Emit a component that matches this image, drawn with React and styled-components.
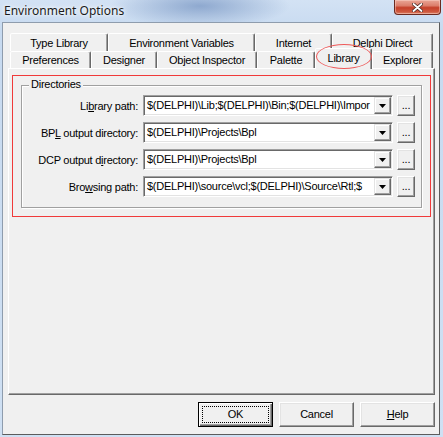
import React from "react";
import styled, { createGlobalStyle } from "styled-components";

const Global = createGlobalStyle`
  html, body { margin: 0; padding: 0; }
  body { width: 443px; height: 437px; overflow: hidden; background: #cddff3; }
  * { box-sizing: border-box; }
`;

const Window = styled.div`
  width: 443px;
  height: 437px;
  display: flex;
  flex-direction: column;
  background:
    radial-gradient(ellipse 90px 22px at 200px 6px, rgba(120,150,195,0.75), rgba(120,150,195,0) 100%),
    linear-gradient(#d3e2f4, #c7daf0 30px, #cfe0f3);
  font-family: "Liberation Sans", Arial, sans-serif;
  font-size: 11px;
  letter-spacing: -0.25px;
  color: #000;
`;

const TitleBar = styled.div`
  height: 22px;
  display: flex;
  align-items: flex-start;
  flex-shrink: 0;
`;

const Title = styled.div`
  padding-left: 4px;
  line-height: 21px;
  font-family: "Noto Sans", "Open Sans", sans-serif;
  font-size: 12px;
  letter-spacing: 0;
  color: #1b1b1b;
  text-shadow: 0 0 6px #fff, 0 0 3px #fff;
`;

const CloseButton = styled.div`
  margin-left: auto;
  margin-right: 2px;
  width: 47px;
  height: 15px;
  border: 1px solid #6b2a20;
  border-top: none;
  border-radius: 0 0 4px 4px;
  background: linear-gradient(#e9a696 0%, #dc7f6c 40%, #c5402a 55%, #cf5a40 85%, #dd8a6e 100%);
  box-shadow: inset 0 0 0 1px rgba(255,220,210,0.45);
  display: flex;
  align-items: center;
  justify-content: center;
`;

const Client = styled.div`
  flex: 1;
  margin: 0 3px 2px 2px;
  border: 1px solid;
  border-color: #8e9cad #5c5c5c #5c5c5c #8e9cad;
  background: #f0f0f0;
  display: flex;
  flex-direction: column;
`;

const TabControl = styled.div`
  position: relative;
  flex: 1;
  margin: 10px 4px 0 5px;
  display: flex;
  flex-direction: column;
`;

const TabStrip = styled.div`
  padding: 0 1px 0 2px;
  display: flex;
  flex-direction: column;
`;

const TabRow = styled.div`
  display: flex;
  align-items: flex-end;
  height: ${(p) => p.$h}px;
`;

const Tab = styled.div`
  position: relative;
  width: ${(p) => p.$w}px;
  height: ${(p) => (p.$active ? p.$h + 4 : p.$h)}px;
  margin-top: ${(p) => (p.$active ? -3 : 0)}px;
  margin-bottom: ${(p) => (p.$active ? -1 : 0)}px;
  z-index: ${(p) => (p.$active ? 2 : 1)};
  flex-shrink: 0;
  border: 1px solid;
  border-bottom: none;
  border-color: #fff #696969 transparent #fff;
  border-radius: 2px 2px 0 0;
  box-shadow: inset -1px 0 #a0a0a0;
  background: #f0f0f0;
  display: flex;
  align-items: center;
  justify-content: center;
  padding-bottom: ${(p) => (p.$active ? 2 : 0)}px;
  white-space: nowrap;
`;

const TabCircle = styled.div`
  position: absolute;
  left: 308px;
  top: 11px;
  width: 56px;
  height: 25px;
  border: 1px solid #ee5a5a;
  border-radius: 50%;
  z-index: 5;
  pointer-events: none;
`;

const Page = styled.div`
  flex: 1;
  border: 1px solid;
  border-color: #fff #696969 #696969 #fff;
  box-shadow: inset -1px -1px #a0a0a0;
  padding: 6px 3px 0 3px;
`;

const Highlight = styled.div`
  height: 142px;
  border: 1px solid #f03a3a;
  padding-top: 9px;
`;

const GroupBox = styled.div`
  position: relative;
  margin: 0 8px;
  border: 1px solid #a0a0a0;
  box-shadow: inset 1px 1px #fff, 1px 1px #fff;
  padding: 9px 0 10px 0;
  display: grid;
  grid-template-columns: 117px 250px 18px;
  grid-auto-rows: 21px;
  column-gap: 4px;
  row-gap: 6px;
  align-items: center;
`;

const GroupLabel = styled.span`
  position: absolute;
  left: 7px;
  top: -8px;
  padding: 0 2px;
  line-height: 13px;
  background: #f0f0f0;
`;

const FieldLabel = styled.label`
  text-align: right;
  padding-right: 1px;
  white-space: nowrap;
`;

const Combo = styled.div`
  height: 21px;
  border: 1px solid;
  border-color: #a0a0a0 #fff #fff #a0a0a0;
  box-shadow: inset 1px 1px #696969, inset -1px -1px #e3e3e3;
  background: #fff;
  padding: 1px;
  display: flex;
  align-items: stretch;
`;

const ComboText = styled.div`
  flex: 1;
  min-width: 0;
  overflow: hidden;
  white-space: nowrap;
  padding-left: 2px;
  line-height: 17px;
`;

const DropButton = styled.div`
  width: 17px;
  flex-shrink: 0;
  border: 1px solid;
  border-color: #e3e3e3 #696969 #696969 #e3e3e3;
  box-shadow: inset -1px -1px #a0a0a0, inset 1px 1px #fff;
  background: #f0f0f0;
  display: flex;
  align-items: center;
  justify-content: center;
`;

const RaisedButton = styled.button`
  font: inherit;
  letter-spacing: inherit;
  color: #000;
  margin: 0;
  padding: 0;
  width: ${(p) => p.$w}px;
  height: ${(p) => p.$h}px;
  border: 1px solid;
  border-color: ${(p) => (p.$default ? "#000" : "#fff #696969 #696969 #fff")};
  box-shadow: ${(p) =>
    p.$default
      ? "inset 1px 1px #fff, inset -1px -1px #696969, inset -2px -2px #a0a0a0"
      : "inset -1px -1px #a0a0a0, inset 1px 1px #e3e3e3"};
  background: #f0f0f0;
  outline: ${(p) => (p.$default ? "1px dotted #000" : "none")};
  outline-offset: -5px;
  display: flex;
  align-items: center;
  justify-content: center;
  line-height: 13px;
`;

const Footer = styled.div`
  flex-shrink: 0;
  display: flex;
  justify-content: flex-end;
  gap: 6px;
  padding: 7px 4px 7px 0;
`;

const Arrow = () => (
  <svg width="7" height="4" viewBox="0 0 7 4">
    <polygon points="0,0 7,0 3.5,4" fill="#000" />
  </svg>
);

const rows = [
  { label: <>Li<u>b</u>rary path:</>, value: "$(DELPHI)\\Lib;$(DELPHI)\\Bin;$(DELPHI)\\Impor" },
  { label: <>BP<u>L</u> output directory:</>, value: "$(DELPHI)\\Projects\\Bpl" },
  { label: <>DCP output d<u>i</u>rectory:</>, value: "$(DELPHI)\\Projects\\Bpl" },
  { label: <>Bro<u>w</u>sing path:</>, value: "$(DELPHI)\\source\\vcl;$(DELPHI)\\Source\\Rtl;$" },
];

const backTabs = [
  ["Type Library", 98],
  ["Environment Variables", 147],
  ["Internet", 77],
  ["Delphi Direct", 101],
];

const frontTabs = [
  ["Preferences", 81],
  ["Designer", 66],
  ["Object Inspector", 100],
  ["Palette", 58],
  ["Library", 57, true],
  ["Explorer", 61],
];

export default function App() {
  return (
    <>
      <Global />
      <Window>
        <TitleBar>
          <Title>Environment Options</Title>
          <CloseButton>
            <svg width="11" height="9" viewBox="0 0 11 9">
              <path d="M1.5 1 L9.5 8 M9.5 1 L1.5 8" stroke="#4a2a25" strokeWidth="3.4" strokeLinecap="round" />
              <path d="M1.5 1 L9.5 8 M9.5 1 L1.5 8" stroke="#fff" strokeWidth="1.8" strokeLinecap="round" />
            </svg>
          </CloseButton>
        </TitleBar>
        <Client>
          <TabControl>
            <TabStrip>
              <TabRow $h={18}>
                {backTabs.map(([t, w]) => (
                  <Tab key={t} $w={w} $h={18}>{t}</Tab>
                ))}
              </TabRow>
              <TabRow $h={17}>
                {frontTabs.map(([t, w, a]) => (
                  <Tab key={t} $w={w} $h={17} $active={a}>{t}</Tab>
                ))}
              </TabRow>
            </TabStrip>
            <TabCircle />
            <Page>
              <Highlight>
                <GroupBox>
                  <GroupLabel>Directories</GroupLabel>
                  {rows.map((r, i) => (
                    <React.Fragment key={i}>
                      <FieldLabel>{r.label}</FieldLabel>
                      <Combo>
                        <ComboText>{r.value}</ComboText>
                        <DropButton><Arrow /></DropButton>
                      </Combo>
                      <RaisedButton $w={18} $h={21}>...</RaisedButton>
                    </React.Fragment>
                  ))}
                </GroupBox>
              </Highlight>
            </Page>
          </TabControl>
          <Footer>
            <RaisedButton $w={75} $h={25} $default>OK</RaisedButton>
            <RaisedButton $w={75} $h={25}>Cancel</RaisedButton>
            <RaisedButton $w={75} $h={25}><span><u>H</u>elp</span></RaisedButton>
          </Footer>
        </Client>
      </Window>
    </>
  );
}
